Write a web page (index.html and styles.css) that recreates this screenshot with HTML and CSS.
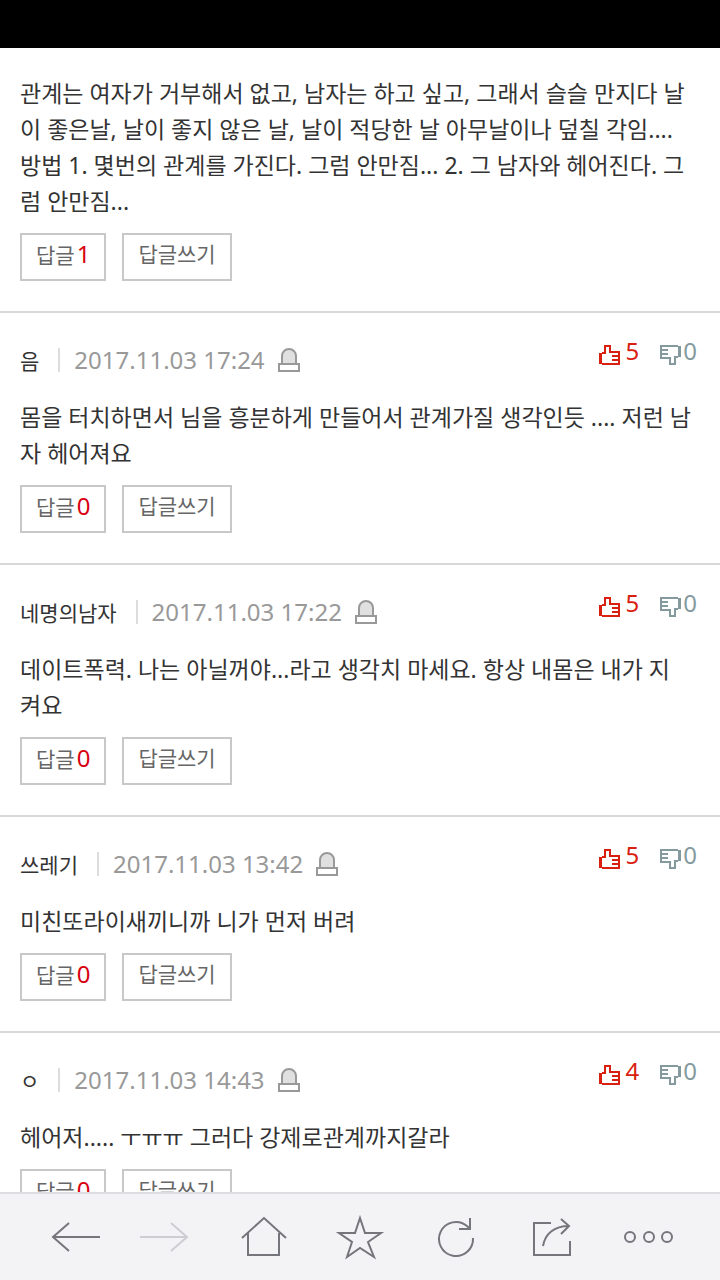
FILE: index.html
```html
<!DOCTYPE html>
<html lang="ko">
  <head>
    <meta charset="UTF-8" />
    <meta name="viewport" content="width=device-width, initial-scale=1.0" />
    <title>댓글</title>
    <link rel="stylesheet" href="styles.css">
  </head>
  <body>
    <svg class="symbols" aria-hidden="true">
      <symbol id="report" viewBox="0 0 22 26">
        <path d="M4 17V9a7 7 0 0 1 14 0v8" fill="#e0e0e0" stroke="#999" stroke-width="2" />
        <path d="M1 17h20v7H1z" fill="#fff" stroke="#999" stroke-width="2" />
      </symbol>
      <symbol id="thumb" viewBox="0 0 22 22">
        <path d="M0 9h3v11H0z" fill="currentColor" />
        <path d="M3 9h3V2h5v6h9v12H8M3 20h5M13 12h7M13 16h7" fill="none" stroke="currentColor" stroke-width="2" />
      </symbol>
    </svg>

    <div class="status-bar"></div>
    <main class="comments">
      <article class="comment first">
        <p class="text">관계는 여자가 거부해서 없고, 남자는 하고 싶고, 그래서 슬슬 만지다 날<br>이 좋은날, 날이 좋지 않은 날, 날이 적당한 날 아무날이나 덮칠 각임....<br>방법 1. 몇번의 관계를 가진다. 그럼 안만짐... 2. 그 남자와 헤어진다. 그<br>럼 안만짐...</p>
        <div class="actions">
          <button type="button">답글<em>1</em></button>
          <button type="button">답글쓰기</button>
        </div>
      </article>

      <article class="comment">
        <header class="meta">
          <span class="name">음</span>
          <time>2017.11.03 17:24</time>
          <button type="button" class="report" aria-label="신고"><svg><use href="#report" /></svg></button>
          <div class="votes">
            <button type="button" class="up" aria-label="추천"><svg><use href="#thumb" /></svg>5</button>
            <button type="button" class="down" aria-label="반대"><svg><use href="#thumb" /></svg>0</button>
          </div>
        </header>
        <p class="text">몸을 터치하면서 님을 흥분하게 만들어서 관계가질 생각인듯 .... 저런 남<br>자 헤어져요</p>
        <div class="actions">
          <button type="button">답글<em>0</em></button>
          <button type="button">답글쓰기</button>
        </div>
      </article>

      <article class="comment">
        <header class="meta">
          <span class="name">네명의남자</span>
          <time>2017.11.03 17:22</time>
          <button type="button" class="report" aria-label="신고"><svg><use href="#report" /></svg></button>
          <div class="votes">
            <button type="button" class="up" aria-label="추천"><svg><use href="#thumb" /></svg>5</button>
            <button type="button" class="down" aria-label="반대"><svg><use href="#thumb" /></svg>0</button>
          </div>
        </header>
        <p class="text">데이트폭력. 나는 아닐꺼야...라고 생각치 마세요. 항상 내몸은 내가 지<br>켜요</p>
        <div class="actions">
          <button type="button">답글<em>0</em></button>
          <button type="button">답글쓰기</button>
        </div>
      </article>

      <article class="comment">
        <header class="meta">
          <span class="name">쓰레기</span>
          <time>2017.11.03 13:42</time>
          <button type="button" class="report" aria-label="신고"><svg><use href="#report" /></svg></button>
          <div class="votes">
            <button type="button" class="up" aria-label="추천"><svg><use href="#thumb" /></svg>5</button>
            <button type="button" class="down" aria-label="반대"><svg><use href="#thumb" /></svg>0</button>
          </div>
        </header>
        <p class="text">미친또라이새끼니까 니가 먼저 버려</p>
        <div class="actions">
          <button type="button">답글<em>0</em></button>
          <button type="button">답글쓰기</button>
        </div>
      </article>

      <article class="comment">
        <header class="meta">
          <span class="name">ㅇ</span>
          <time>2017.11.03 14:43</time>
          <button type="button" class="report" aria-label="신고"><svg><use href="#report" /></svg></button>
          <div class="votes">
            <button type="button" class="up" aria-label="추천"><svg><use href="#thumb" /></svg>4</button>
            <button type="button" class="down" aria-label="반대"><svg><use href="#thumb" /></svg>0</button>
          </div>
        </header>
        <p class="text">헤어저..... ㅜㅠㅠ 그러다 강제로관계까지갈라</p>
        <div class="actions">
          <button type="button">답글<em>0</em></button>
          <button type="button">답글쓰기</button>
        </div>
      </article>
    </main>

    <nav class="toolbar">
      <button type="button" aria-label="뒤로"><svg viewBox="0 0 50 50"><path d="M53 25H6M22 11L6 25l16 14" /></svg></button>
      <button type="button" aria-label="앞으로" disabled><svg viewBox="0 0 50 50"><path d="M-3 25h47M28 11l16 14-16 14" /></svg></button>
      <button type="button" aria-label="홈"><svg viewBox="0 0 50 50"><path d="M3 26L25 6l22 20M9 21v22h31V21" /></svg></button>
      <button type="button" aria-label="즐겨찾기"><svg viewBox="0 0 50 50"><path d="M25 6l5 15h16L33 30l6 15-14-9-13 9 5-15L4 21h16z" /></svg></button>
      <button type="button" aria-label="새로고침"><svg viewBox="0 0 50 50"><path d="M42 26a17 17 0 1 1-6-12l3 3M39 6v11H28" /></svg></button>
      <button type="button" aria-label="공유"><svg viewBox="0 0 50 50"><path d="M24 11H7v32h36V29M16 34c2-12 11-20 26-20M34 7l8 7-8 8" /></svg></button>
      <button type="button" aria-label="더보기"><svg viewBox="0 0 50 50"><circle cx="7" cy="25" r="5" /><circle cx="26" cy="25" r="5" /><circle cx="44" cy="25" r="5" /></svg></button>
    </nav>
  </body>
</html>
```
FILE: styles.css
```css
* {
  box-sizing: border-box;
}
body {
  display: flex;
  flex-direction: column;
  height: 100vh;
  margin: 0;
  overflow: hidden;
  font-family: "Noto Sans", "Noto Sans CJK KR", sans-serif;
  background-color: #fff;
  color: #333;
}
button {
  padding: 0;
  border: none;
  background: none;
  font-family: inherit;
  color: inherit;
  cursor: pointer;
}
.symbols {
  display: none;
}
.status-bar {
  flex: none;
  height: 48px;
  background-color: #000;
}
.comments {
  flex: 1;
  min-height: 0;
  overflow: hidden;
}
.comment {
  padding: 30px 16px 30px 20px;
  border-bottom: 2px solid #d8d8d8;
}
.first {
  padding-top: 27px;
}
.meta {
  display: flex;
  align-items: center;
  height: 34px;
  margin-bottom: 22px;
}
.name {
  font-size: 21px;
}
time {
  margin-left: 19px;
  padding-left: 14px;
  border-left: 2px solid #ddd;
  font-size: 24px;
  line-height: 24px;
  color: #999;
}
.report {
  margin-left: 13px;
}
.report svg {
  display: block;
  width: 22px;
  height: 26px;
}
.votes {
  display: flex;
  gap: 20px;
  align-self: flex-start;
  margin: -10px 7px 0 auto;
}
.votes button {
  display: flex;
  align-items: center;
  gap: 5px;
  font-size: 24px;
  line-height: 36px;
}
.votes svg {
  width: 22px;
  height: 22px;
  margin-top: 8px;
}
.votes .up {
  color: #d92010;
}
.votes .down {
  gap: 2px;
  color: #849a9f;
}
.down svg {
  transform: rotate(180deg);
}
.text {
  margin: 0;
  font-size: 23px;
  line-height: 36px;
}
.actions {
  display: flex;
  gap: 16px;
  margin-top: 14px;
}
.actions button {
  height: 48px;
  padding: 0 14px 8px;
  border: 2px solid #c8c8c8;
  font-size: 21px;
  color: #666;
}
.actions em {
  margin-left: 2px;
  font-size: 24px;
  font-style: normal;
  color: #d80010;
}
.toolbar {
  display: flex;
  flex: none;
  align-items: center;
  justify-content: space-around;
  height: 88px;
  padding: 0 24px;
  border-top: 2px solid #dedee2;
  background-color: #f3f3f6;
  color: #75757c;
}
.toolbar svg {
  display: block;
  width: 50px;
  height: 50px;
  overflow: visible;
  fill: none;
  stroke: currentColor;
  stroke-width: 2;
}
.toolbar button:disabled {
  color: #cdcdd3;
}
```
